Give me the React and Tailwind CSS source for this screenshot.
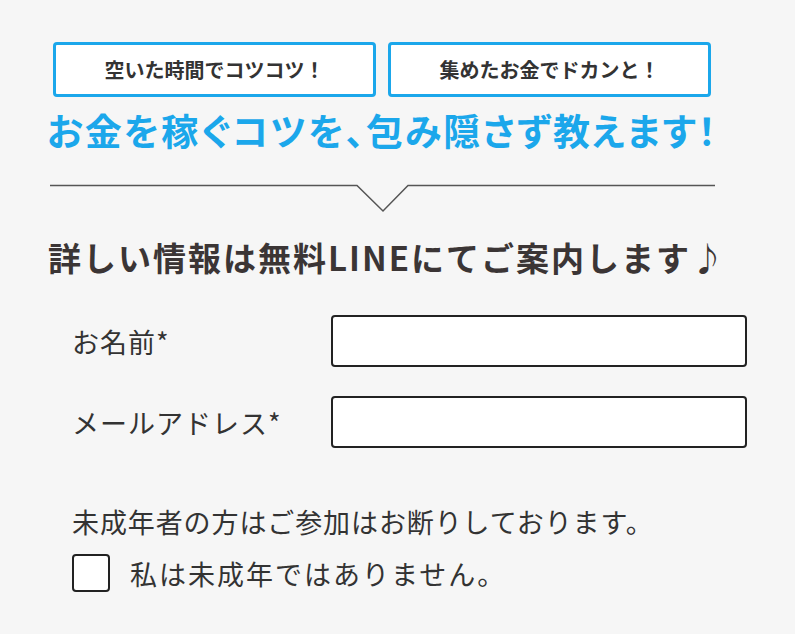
import React, { useState } from 'react';

const font = { fontFamily: '"Noto Sans CJK JP", "Noto Sans", sans-serif' };

const TagButton = ({ children }) => (
  <div className="w-[323px] h-[55px] flex items-center justify-center bg-white border-[3px] border-[#1ba7eb] rounded-[4px] text-[20px] font-bold text-[#333]">
    {children}
  </div>
);

const App = () => {
  const [checked, setChecked] = useState(false);

  return (
    <div className="min-h-screen bg-[#f6f6f6] text-[#333]" style={font}>
      <div className="pt-[42px] pl-[50px] w-[715px]">
        {/* top pills */}
        <div className="flex gap-[12px] pl-[3px]">
          <TagButton>空いた時間でコツコツ！</TagButton>
          <TagButton>集めたお金でドカンと！</TagButton>
        </div>

        {/* blue catch copy */}
        <h1 className="mt-[8px] h-[50px] flex items-center justify-center text-[37px] leading-none font-bold text-[#1ba7eb] tracking-[2px] [font-feature-settings:'palt'] whitespace-nowrap">
          お金を稼ぐコツを、包み隠さず教えます！
        </h1>

        {/* divider with notch */}
        <svg className="block mt-[29px]" width="665" height="30" viewBox="0 0 665 30">
          <polyline
            points="0,1.5 307,1.5 333,27 358,1.5 665,1.5"
            fill="none"
            stroke="#555"
            strokeWidth="1.5"
          />
        </svg>

        <h2 className="mt-[27px] -ml-[2px] text-[33px] leading-none font-bold text-[#3b3535] tracking-[2px] whitespace-nowrap">
          詳しい情報は無料LINEにてご案内します♪
        </h2>
      </div>

      {/* form */}
      <div className="mt-[41px] pl-[72px] pr-[48px] flex flex-col">
        <div className="flex items-center h-[52px]">
          <label className="w-[259px] text-[27px] leading-none tracking-[1px]">お名前*</label>
          <input className="w-[416px] h-[52px] bg-white border-2 border-[#222] rounded-[4px] outline-none px-3" />
        </div>
        <div className="flex items-center h-[52px] mt-[29px]">
          <label className="w-[259px] text-[27px] leading-none tracking-[1px]">メールアドレス*</label>
          <input className="w-[416px] h-[52px] bg-white border-2 border-[#222] rounded-[4px] outline-none px-3" />
        </div>

        <p className="mt-[60px] text-[27px] leading-none whitespace-nowrap tracking-[0.9px]">
          未成年者の方はご参加はお断りしております。
        </p>
        <label className="mt-[19px] flex items-center cursor-pointer">
          <span
            onClick={() => setChecked(!checked)}
            className="w-[38px] h-[38px] bg-white border-2 border-[#222] rounded-[4px] flex items-center justify-center text-[24px]"
          >
            {checked ? '✓' : ''}
          </span>
          <span className="ml-[20px] text-[27px] leading-none tracking-[2px]">私は未成年ではありません。</span>
        </label>
      </div>
    </div>
  );
};

export default App;
